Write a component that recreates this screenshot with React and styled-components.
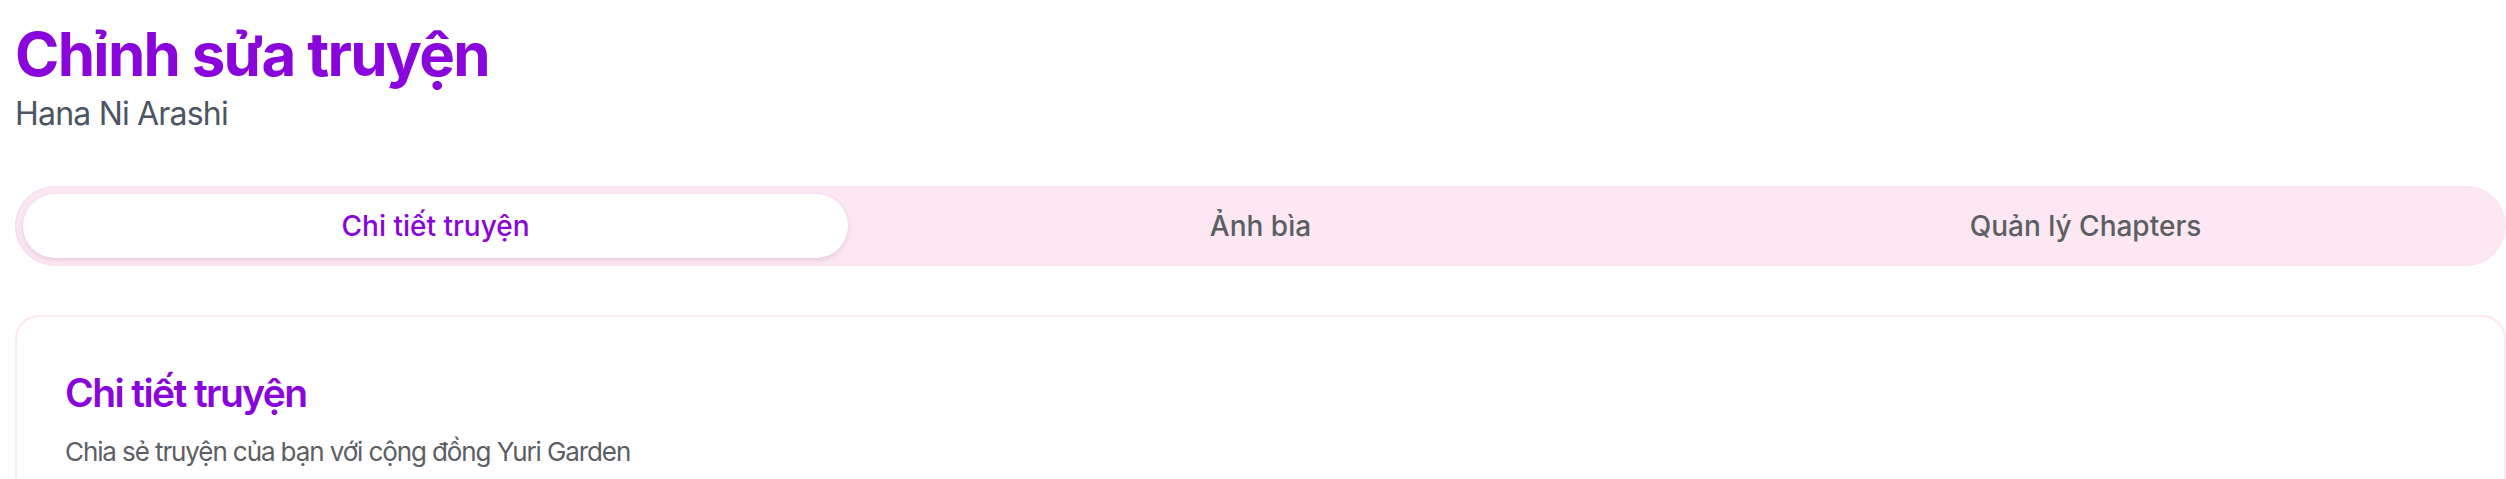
import React, { useState } from 'react';
import styled, { createGlobalStyle } from 'styled-components';

const GlobalStyle = createGlobalStyle`
  html, body {
    margin: 0;
    padding: 0;
    background: #ffffff;
    font-family: Inter, "Noto Sans", "Liberation Sans", sans-serif;
    overflow: hidden;
  }
  * {
    box-sizing: border-box;
  }
`;

const tabs = [
  { id: 'details', label: 'Chi tiết truyện' },
  { id: 'cover', label: 'Ảnh bìa' },
  { id: 'chapters', label: 'Quản lý Chapters' },
];

function App() {
  const [active, setActive] = useState('details');

  return (
    <>
      <GlobalStyle />
      <Page>
        <Header>
          <PageTitle>Chỉnh sửa truyện</PageTitle>
          <StoryName>Hana Ni Arashi</StoryName>
        </Header>

        <TabList>
          {tabs.map((tab) => (
            <TabButton
              key={tab.id}
              $active={active === tab.id}
              onClick={() => setActive(tab.id)}
            >
              {tab.label}
            </TabButton>
          ))}
        </TabList>

        <Card>
          <CardHeader>
            <CardTitle>Chi tiết truyện</CardTitle>
            <CardDescription>Chia sẻ truyện của bạn với cộng đồng Yuri Garden</CardDescription>
          </CardHeader>
        </Card>
      </Page>
    </>
  );
}

const Page = styled.div`
  display: flex;
  flex-direction: column;
  padding: 18px 0 0 15px;
`;

const Header = styled.div`
  display: flex;
  flex-direction: column;
  margin-bottom: 48px;
`;

const PageTitle = styled.h1`
  margin: 0;
  font-size: 60px;
  line-height: 72px;
  font-weight: 700;
  color: #8a04dc;
  letter-spacing: -1.7px;
`;

const StoryName = styled.p`
  margin: 0;
  font-size: 32px;
  line-height: 48px;
  color: #4b5563;
  letter-spacing: -0.8px;
`;

const TabList = styled.div`
  display: grid;
  grid-template-columns: repeat(3, 1fr);
  padding: 8px;
  height: 80px;
  background: #fce7f3;
  border-radius: 40px;
  box-shadow: inset 1px 0 2px rgba(220, 160, 200, 0.25);
`;

const TabButton = styled.button`
  display: flex;
  align-items: center;
  justify-content: center;
  height: 64px;
  border: none;
  border-radius: 32px;
  font-family: inherit;
  font-size: 28px;
  font-weight: 500;
  cursor: pointer;
  background: ${(p) => (p.$active ? '#ffffff' : 'transparent')};
  color: ${(p) => (p.$active ? '#8a04dc' : '#5b5e63')};
  box-shadow: ${(p) => (p.$active ? '0 2px 5px rgba(150, 90, 130, 0.22)' : 'none')};
`;

const Card = styled.div`
  margin-top: 49px;
  border: 2px solid #fce7f3;
  border-radius: 24px;
  background: #ffffff;
  min-height: 400px;
`;

const CardHeader = styled.div`
  display: flex;
  flex-direction: column;
  gap: 11px;
  padding: 48px;
`;

const CardTitle = styled.h3`
  margin: 0;
  font-size: 39px;
  line-height: 56px;
  font-weight: 600;
  letter-spacing: -1.6px;
  color: #8a04dc;
`;

const CardDescription = styled.p`
  margin: 0;
  font-size: 26px;
  line-height: 40px;
  color: #5b5e63;
  letter-spacing: -1.1px;
`;

export default App;
